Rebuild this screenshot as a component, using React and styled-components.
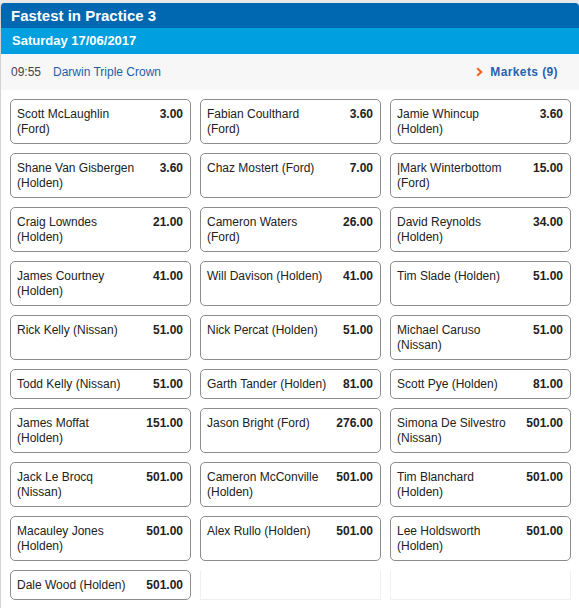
import React from "react";
import styled, { createGlobalStyle } from "styled-components";

const Global = createGlobalStyle`
  html, body { margin: 0; padding: 0; }
  body {
    background: #e9e9e9;
    font-family: "Liberation Sans", Arial, sans-serif;
  }
`;

const Panel = styled.div`
  margin-top: 3px;
  width: 579px;
  min-height: 605px;
  background: #fff;
  border-left: 1px solid #d3d3d3;
  border-radius: 4px 4px 0 0;
  overflow: hidden;
  box-sizing: border-box;
`;

const TitleBar = styled.div`
  height: 25px;
  background: #0067b1;
  color: #fff;
  font-weight: bold;
  font-size: 15px;
  line-height: 25px;
  padding-left: 10px;
`;

const DateBar = styled.div`
  height: 26px;
  background: #009fe0;
  color: #fff;
  font-weight: bold;
  font-size: 13px;
  line-height: 26px;
  padding-left: 11px;
`;

const InfoRow = styled.div`
  height: 36px;
  background: #f7f7f7;
  display: flex;
  align-items: center;
  padding: 0 21px 0 10px;
  font-size: 12px;
`;

const Time = styled.span`
  color: #444;
  width: 42px;
`;

const EventName = styled.span`
  color: #1d5fa9;
  flex: 1;
`;

const MarketsLink = styled.span`
  color: #2962b0;
  font-weight: bold;
  font-size: 12px;
  letter-spacing: 0.4px;
  display: flex;
  align-items: center;
  gap: 7px;
`;

const Chevron = styled.svg`
  width: 7px;
  height: 10px;
`;

const Grid = styled.div`
  display: grid;
  grid-template-columns: repeat(3, 181px);
  column-gap: 9px;
  row-gap: 9px;
  padding: 9px 0 8px 9px;
`;

const Cell = styled.div`
  border: 1px solid #8c8c8c;
  border-radius: 5px;
  background: #fff;
  padding: 7px 7px 6px 6px;
  display: flex;
  align-items: flex-start;
  font-size: 12px;
  line-height: 15px;
  color: #222;
`;

const Empty = styled.div`
  border: 1px solid #f0f0f0;
  border-top-color: transparent;
`;

const Name = styled.span`
  flex: 1;
  max-width: 123px;
`;

const Price = styled.span`
  flex: none;
  margin-left: auto;
  padding-left: 12px;
  font-weight: bold;
`;

const runners = [
  ["Scott McLaughlin (Ford)", "3.00"],
  ["Fabian Coulthard (Ford)", "3.60"],
  ["Jamie Whincup (Holden)", "3.60"],
  ["Shane Van Gisbergen (Holden)", "3.60"],
  ["Chaz Mostert (Ford)", "7.00"],
  ["|Mark Winterbottom (Ford)", "15.00"],
  ["Craig Lowndes (Holden)", "21.00"],
  ["Cameron Waters (Ford)", "26.00"],
  ["David Reynolds (Holden)", "34.00"],
  ["James Courtney (Holden)", "41.00"],
  ["Will Davison (Holden)", "41.00"],
  ["Tim Slade (Holden)", "51.00"],
  ["Rick Kelly (Nissan)", "51.00"],
  ["Nick Percat (Holden)", "51.00"],
  ["Michael Caruso (Nissan)", "51.00"],
  ["Todd Kelly (Nissan)", "51.00"],
  ["Garth Tander (Holden)", "81.00"],
  ["Scott Pye (Holden)", "81.00"],
  ["James Moffat (Holden)", "151.00"],
  ["Jason Bright (Ford)", "276.00"],
  ["Simona De Silvestro (Nissan)", "501.00"],
  ["Jack Le Brocq (Nissan)", "501.00"],
  ["Cameron McConville (Holden)", "501.00"],
  ["Tim Blanchard (Holden)", "501.00"],
  ["Macauley Jones (Holden)", "501.00"],
  ["Alex Rullo (Holden)", "501.00"],
  ["Lee Holdsworth (Holden)", "501.00"],
  ["Dale Wood (Holden)", "501.00"],
];

export default function App() {
  return (
    <>
      <Global />
      <Panel>
        <TitleBar>Fastest in Practice 3</TitleBar>
        <DateBar>Saturday 17/06/2017</DateBar>
        <InfoRow>
          <Time>09:55</Time>
          <EventName>Darwin Triple Crown</EventName>
          <MarketsLink>
            <Chevron viewBox="0 0 7 10">
              <path d="M1.2 1.2 L5.2 5 L1.2 8.8" fill="none" stroke="#f26522" strokeWidth="2.2" />
            </Chevron>
            Markets (9)
          </MarketsLink>
        </InfoRow>
        <Grid>
          {runners.map(([n, p]) => (
            <Cell key={n}>
              <Name>{n}</Name>
              <Price>{p}</Price>
            </Cell>
          ))}
          <Empty />
          <Empty />
        </Grid>
      </Panel>
    </>
  );
}
